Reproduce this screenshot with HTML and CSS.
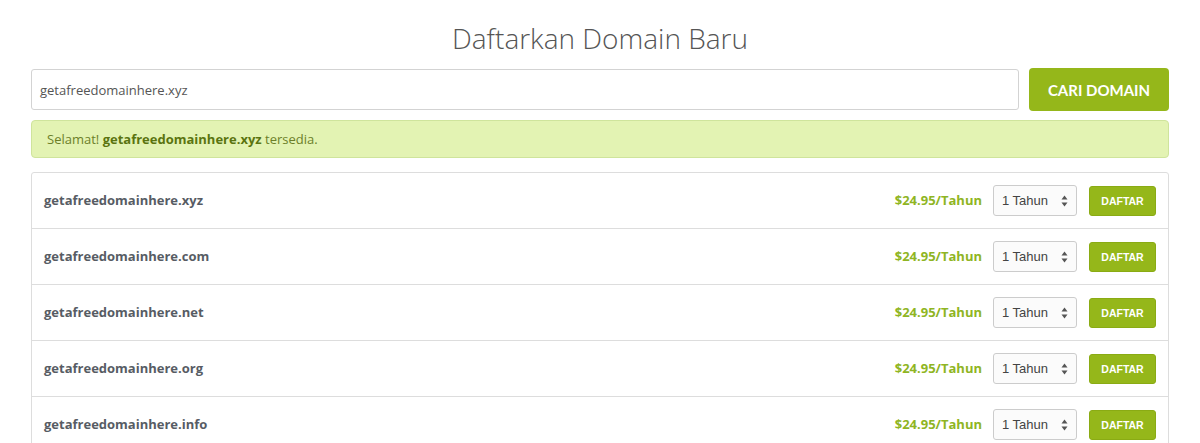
FILE: index.html
```html
<!DOCTYPE html>
<html lang="id">
<head>
<meta charset="utf-8">
<title>Daftarkan Domain Baru</title>
<link rel="stylesheet" href="styles.css">
</head>
<body>
<div class="page">
  <h1 class="title">Daftarkan Domain Baru</h1>
  <div class="search">
    <div class="search-input">getafreedomainhere.xyz</div>
    <button class="search-btn">CARI DOMAIN</button>
  </div>
  <div class="alert">Selamat! <strong>getafreedomainhere.xyz</strong> tersedia.</div>
  <div class="results">
    <div class="row">
      <div class="domain">getafreedomainhere.xyz</div>
      <div class="actions">
        <span class="price">$24.95/Tahun</span>
        <div class="select"><span>1 Tahun</span><svg class="arrows" width="7" height="12" viewBox="0 0 7 12"><path d="M3.5 0.5L6.5 4.5H0.5Z M3.5 11.5L6.5 7.5H0.5Z" fill="#555"/></svg></div>
        <button class="btn">DAFTAR</button>
      </div>
    </div>
    <div class="row">
      <div class="domain">getafreedomainhere.com</div>
      <div class="actions">
        <span class="price">$24.95/Tahun</span>
        <div class="select"><span>1 Tahun</span><svg class="arrows" width="7" height="12" viewBox="0 0 7 12"><path d="M3.5 0.5L6.5 4.5H0.5Z M3.5 11.5L6.5 7.5H0.5Z" fill="#555"/></svg></div>
        <button class="btn">DAFTAR</button>
      </div>
    </div>
    <div class="row">
      <div class="domain">getafreedomainhere.net</div>
      <div class="actions">
        <span class="price">$24.95/Tahun</span>
        <div class="select"><span>1 Tahun</span><svg class="arrows" width="7" height="12" viewBox="0 0 7 12"><path d="M3.5 0.5L6.5 4.5H0.5Z M3.5 11.5L6.5 7.5H0.5Z" fill="#555"/></svg></div>
        <button class="btn">DAFTAR</button>
      </div>
    </div>
    <div class="row">
      <div class="domain">getafreedomainhere.org</div>
      <div class="actions">
        <span class="price">$24.95/Tahun</span>
        <div class="select"><span>1 Tahun</span><svg class="arrows" width="7" height="12" viewBox="0 0 7 12"><path d="M3.5 0.5L6.5 4.5H0.5Z M3.5 11.5L6.5 7.5H0.5Z" fill="#555"/></svg></div>
        <button class="btn">DAFTAR</button>
      </div>
    </div>
    <div class="row">
      <div class="domain">getafreedomainhere.info</div>
      <div class="actions">
        <span class="price">$24.95/Tahun</span>
        <div class="select"><span>1 Tahun</span><svg class="arrows" width="7" height="12" viewBox="0 0 7 12"><path d="M3.5 0.5L6.5 4.5H0.5Z M3.5 11.5L6.5 7.5H0.5Z" fill="#555"/></svg></div>
        <button class="btn">DAFTAR</button>
      </div>
    </div>
  </div>
</div>
</body>
</html>
```
FILE: styles.css
```css
html, body {
  margin: 0;
  padding: 0;
  background: #fff;
}
body {
  font-family: "Open Sans", "Liberation Sans", sans-serif;
  color: #555;
}
.page {
  padding: 20px 31px 0;
}
.title {
  margin: 0;
  font-size: 28px;
  font-weight: 300;
  line-height: 36px;
  height: 36px;
  text-align: center;
  color: #555;
}
.search {
  display: flex;
  align-items: center;
  gap: 10px;
  margin-top: 12px;
  height: 43px;
}
.search-input {
  flex: 1;
  height: 39px;
  box-sizing: content-box;
  border: 1px solid #d3d3d3;
  border-radius: 3px;
  padding: 0 8px;
  display: flex;
  align-items: center;
  font-size: 13px;
  color: #555;
}
.search-btn {
  width: 140px;
  height: 43px;
  border: none;
  border-radius: 4px;
  background: #95b71a;
  color: #fff;
  font-family: "Lato", "Open Sans", sans-serif;
  font-weight: 700;
  font-size: 15px;
  padding: 0;
}
.alert {
  margin-top: 9px;
  height: 36px;
  line-height: 36px;
  border: 1px solid #cfe49c;
  border-radius: 4px;
  background: #e3f3b3;
  color: #6c7f29;
  font-size: 13px;
  padding: 0 15px;
}
.alert strong {
  font-weight: 700;
  color: #5a7410;
}
.results {
  margin-top: 14px;
  border: 1px solid #ddd;
  border-radius: 3px;
}
.row {
  height: 55px;
  display: flex;
  align-items: center;
  justify-content: space-between;
  padding: 0 12px;
}
.row + .row {
  border-top: 1px solid #ddd;
}
.domain {
  font-size: 13px;
  font-weight: 700;
  color: #575c64;
  margin-top: -2px;
}
.actions {
  display: flex;
  align-items: center;
}
.price {
  font-size: 13px;
  font-weight: 700;
  color: #8fb523;
  margin-right: 11px;
  margin-top: -2px;
}
.select {
  height: 29px;
  border: 1px solid #ccc;
  border-radius: 3px;
  background: #fbfbfb;
  display: flex;
  align-items: center;
  justify-content: space-between;
  padding: 0 8px;
  box-sizing: content-box;
  width: 66px;
  font-family: "Liberation Sans", Arial, sans-serif;
  font-size: 13px;
  color: #444;
}
.arrows {
  display: block;
}
.btn {
  margin-left: 12px;
  width: 67px;
  height: 30px;
  border: 1px solid #8aab14;
  border-radius: 3px;
  background: #95b71a;
  color: #fff;
  font-family: "Liberation Sans", Arial, sans-serif;
  font-weight: 700;
  font-size: 10.5px;
  padding: 0;
}
```
